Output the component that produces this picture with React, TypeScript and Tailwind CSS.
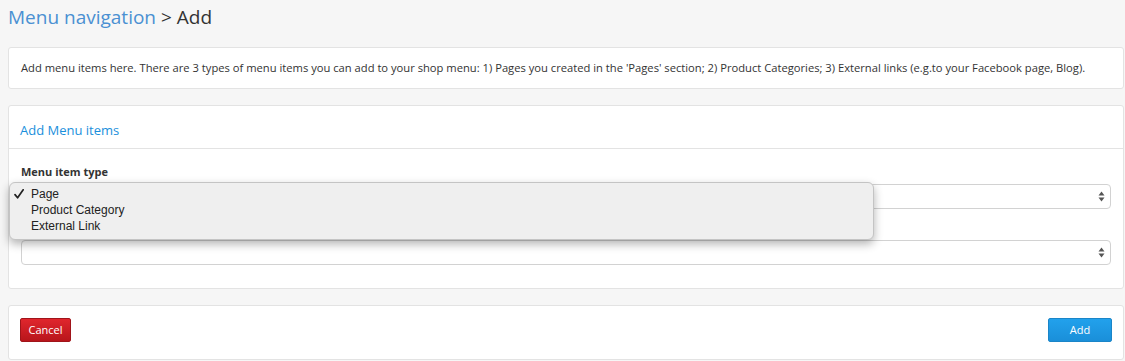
function SelectArrows() {
  return (
    <svg width="7" height="11" viewBox="0 0 7 11" className="text-[#555]">
      <path d="M3.5 0.5 L6.5 4.5 H0.5 Z" fill="currentColor" />
      <path d="M3.5 10.5 L6.5 6.5 H0.5 Z" fill="currentColor" />
    </svg>
  );
}

function FakeSelect() {
  return (
    <div className="flex h-[25px] items-center justify-end rounded-[4px] border border-[#d2d2d2] bg-white pr-[5px]">
      <SelectArrows />
    </div>
  );
}

function CheckMark() {
  return (
    <svg width="10" height="10" viewBox="0 0 10 10" className="text-[#222]">
      <path d="M1 5.6 L3.6 8.8 L9.2 0.8" fill="none" stroke="currentColor" strokeWidth="1.7" strokeLinecap="round" strokeLinejoin="round" />
    </svg>
  );
}

export default function App() {
  return (
    <div
      className="min-h-[361px] w-[1125px] bg-[#f6f6f6] pr-[1px] pl-[8px] text-[#333]"
      style={{ fontFamily: '"Open Sans", sans-serif' }}
    >
      <h1 className="pt-[4px] text-[19px] leading-[26px] font-normal">
        <span className="text-[#4a90d2]">Menu navigation</span>
        <span className="text-[#333]"> &gt; Add</span>
      </h1>

      <div className="mt-[17px] rounded-[3px] border border-[#e3e3e3] bg-white px-[12px] py-[11px] text-[11.2px] leading-[18px] whitespace-nowrap">
        Add menu items here. There are 3 types of menu items you can add to your shop menu: 1) Pages you created in
        the 'Pages' section; 2) Product Categories; 3) External links (e.g.to your Facebook page, Blog).
      </div>

      <div className="mt-[16px] rounded-[3px] border border-[#e3e3e3] bg-white">
        <div className="border-b border-[#e3e3e3] px-[11px] pt-[14px] pb-[8px] text-[13px] leading-[20px] text-[#1a8fdc]">
          Add Menu items
        </div>
        <div className="relative px-[12px] pt-[14px] pb-[23px]">
          <div className="text-[11px] leading-[17px] font-bold">Menu item type</div>
          <div className="mt-[4px]">
            <FakeSelect />
          </div>
          <div className="mt-[31px]">
            <FakeSelect />
          </div>

          <div
            className="absolute top-[33px] left-[0px] w-[865px] rounded-[6px] border border-[#c4c4c4] bg-[#efefef] pt-[3px] pb-[5px] text-[12px] leading-[16px] text-[#222] shadow-[0_4px_10px_rgba(0,0,0,0.3)]"
            style={{ fontFamily: '"Liberation Sans", Arial, sans-serif' }}
          >
            <div className="flex items-center">
              <span className="flex w-[21px] pl-[4px]">
                <CheckMark />
              </span>
              <span>Page</span>
            </div>
            <div className="pl-[21px]">Product Category</div>
            <div className="pl-[21px]">External Link</div>
          </div>
        </div>
      </div>

      <div className="mt-[16px] flex items-center justify-between rounded-[3px] border border-[#e3e3e3] bg-white px-[11px] pt-[12px] pb-[17px]">
        <button className="h-[24px] w-[51px] rounded-[2px] border border-[#a0141a] bg-gradient-to-b from-[#e0262d] to-[#b8151b] text-[11px] text-white">
          Cancel
        </button>
        <button className="h-[24px] w-[64px] rounded-[2px] border border-[#1a85c8] bg-gradient-to-b from-[#22a1ec] to-[#1a8fd9] text-[11px] text-white">
          Add
        </button>
      </div>
    </div>
  );
}
